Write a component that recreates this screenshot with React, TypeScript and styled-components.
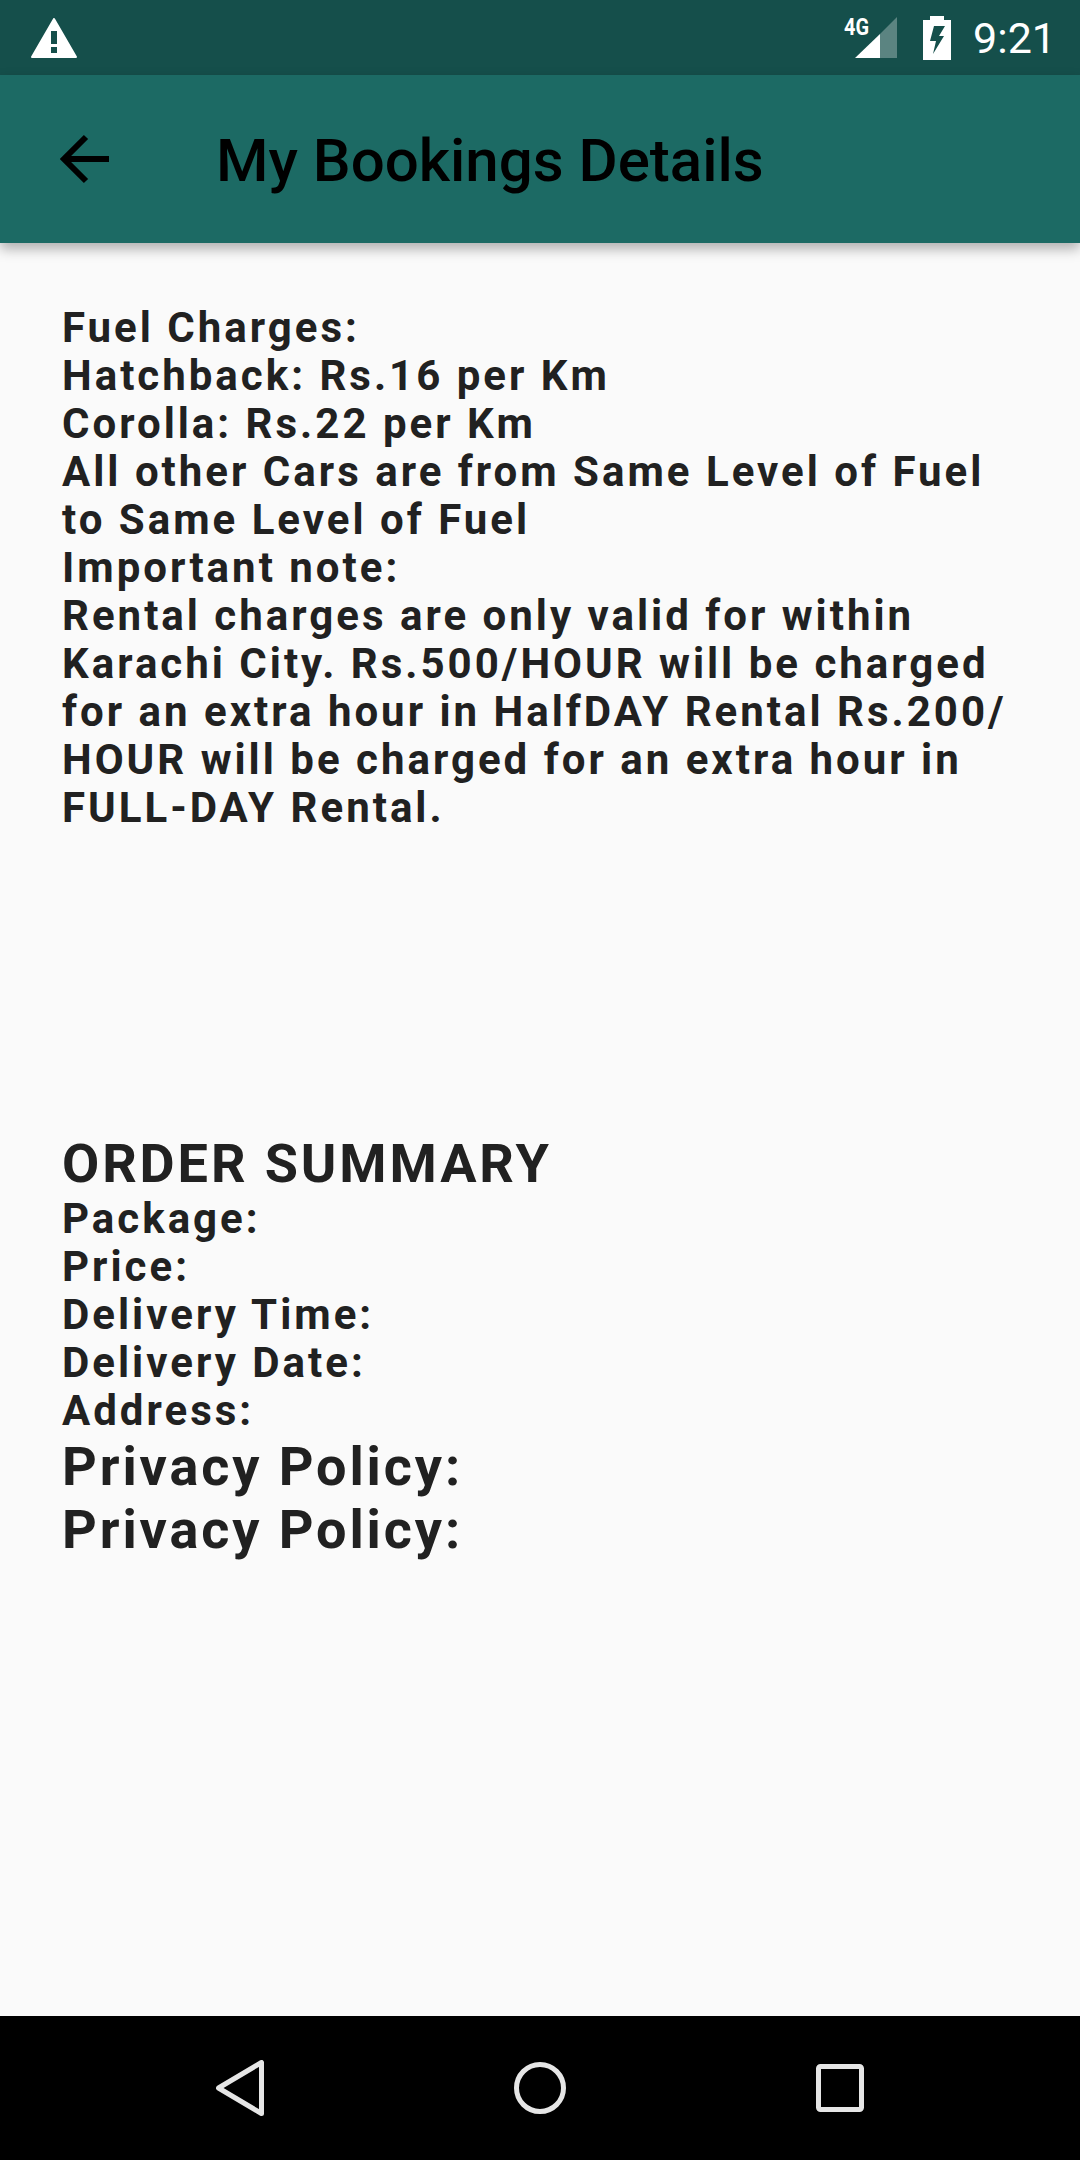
import React from 'react';
import styled, { createGlobalStyle } from 'styled-components';

const GlobalStyle = createGlobalStyle`
  html, body {
    margin: 0;
    padding: 0;
    background: #fafafa;
  }
`;

const Screen = styled.div`
  width: 1080px;
  height: 2160px;
  display: flex;
  flex-direction: column;
  background: #fafafa;
  font-family: Roboto, 'Liberation Sans', sans-serif;
  overflow: hidden;
`;

const StatusBar = styled.div`
  height: 75px;
  flex: none;
  display: flex;
  align-items: center;
  justify-content: space-between;
  padding: 0 24px 0 31px;
  background: #154f4b;
`;

const StatusRight = styled.div`
  display: flex;
  align-items: center;
`;

const Signal = styled.svg`
  overflow: visible;
`;

const Battery = styled.svg`
  margin-left: 25px;
`;

const Clock = styled.span`
  margin-left: 22px;
  color: #fff;
  font-size: 43px;
  font-weight: 400;
  line-height: 50px;
`;

const AppBar = styled.header`
  height: 168px;
  flex: none;
  display: flex;
  align-items: center;
  padding-left: 60px;
  background: #1c6a64;
  box-shadow: 0 6px 12px rgba(0, 0, 0, 0.3);
  position: relative;
  z-index: 1;
`;

const Title = styled.h1`
  margin: 3px 0 0 106px;
  color: #000;
  font-size: 60px;
  font-weight: 500;
  line-height: 70px;
`;

const Content = styled.main`
  flex: 1;
  padding: 61px 62px 0;
`;

const Paragraph = styled.p`
  margin: 0;
  color: #212121;
  font-size: 42px;
  font-weight: 700;
  line-height: 48px;
  letter-spacing: 3px;
`;

const Summary = styled.section`
  margin-top: 301px;
`;

const Heading = styled.h2`
  margin: 0;
  color: #212121;
  font-size: 54px;
  font-weight: 700;
  line-height: 62px;
  letter-spacing: 2.9px;
`;

const SummaryRow = styled.div`
  color: #212121;
  font-size: 42px;
  font-weight: 700;
  line-height: 48px;
  letter-spacing: 3px;
`;

const PolicyRow = styled.div`
  color: #212121;
  font-size: 54px;
  font-weight: 700;
  line-height: 63px;
  letter-spacing: 2.9px;
`;

const NavBar = styled.nav`
  height: 144px;
  flex: none;
  display: grid;
  grid-template-columns: repeat(3, 300px);
  justify-content: center;
  align-items: center;
  justify-items: center;
  background: #000;
`;

const WarningIcon = () => (
  <svg width="46" height="40" viewBox="0 0 46 40">
    <path
      d="M23 1 L45 39 H1 Z"
      fill="#fff"
      stroke="#fff"
      strokeWidth="2"
      strokeLinejoin="round"
    />
    <rect x="20" y="13" width="6" height="13" fill="#154f4b" />
    <rect x="20" y="29" width="6" height="6" fill="#154f4b" />
  </svg>
);

const SignalIcon = () => (
  <Signal width="54" height="44" viewBox="0 0 54 44">
    <path d="M36 18 L53 1 V42 H36 Z" fill="#fff" fillOpacity="0.3" />
    <path d="M11 42 L36 18 V42 Z" fill="#fff" />
    <text
      x="0"
      y="19"
      fill="#fff"
      fontFamily="Roboto, sans-serif"
      fontSize="23"
      fontWeight="700"
      textLength="25"
      lengthAdjust="spacingAndGlyphs"
    >
      4G
    </text>
  </Signal>
);

const BatteryIcon = () => (
  <Battery width="28" height="44" viewBox="0 0 28 44">
    <path d="M7 0 H21 V4 H28 V44 H0 V4 H7 Z" fill="#fff" />
    <path d="M11 10 H22 L16 20 H21 L10 38 L13 25 H7 Z" fill="#154f4b" />
  </Battery>
);

const BackArrow = () => (
  <svg width="50" height="50" viewBox="0 0 50 50" fill="none">
    <path d="M49 25 H4 M26 3 L4 25 L26 47" stroke="#000" strokeWidth="6" />
  </svg>
);

const NavBack = () => (
  <svg width="48" height="56" viewBox="0 0 48 56" fill="none">
    <path
      d="M45.5 2.5 V53.5 L2.5 28 Z"
      stroke="#e6e6e6"
      strokeWidth="5"
      strokeLinejoin="round"
    />
  </svg>
);

const NavHome = () => (
  <svg width="52" height="52" viewBox="0 0 52 52" fill="none">
    <circle cx="26" cy="26" r="23.5" stroke="#e6e6e6" strokeWidth="5" />
  </svg>
);

const NavRecents = () => (
  <svg width="48" height="48" viewBox="0 0 48 48" fill="none">
    <rect x="2.5" y="2.5" width="43" height="43" rx="2" stroke="#e6e6e6" strokeWidth="5" />
  </svg>
);

export default function App() {
  return (
    <Screen>
      <GlobalStyle />
      <StatusBar>
        <WarningIcon />
        <StatusRight>
          <SignalIcon />
          <BatteryIcon />
          <Clock>9:21</Clock>
        </StatusRight>
      </StatusBar>
      <AppBar>
        <BackArrow />
        <Title>My Bookings Details</Title>
      </AppBar>
      <Content>
        <Paragraph>
          Fuel Charges:
          <br />
          Hatchback: Rs.16 per Km
          <br />
          Corolla: Rs.22 per Km
          <br />
          All other Cars are from Same Level of Fuel
          <br />
          to Same Level of Fuel
          <br />
          Important note:
          <br />
          Rental charges are only valid for within
          <br />
          Karachi City. Rs.500/HOUR will be charged
          <br />
          for an extra hour in HalfDAY Rental Rs.200/
          <br />
          HOUR will be charged for an extra hour in
          <br />
          FULL-DAY Rental.
        </Paragraph>
        <Summary>
          <Heading>ORDER SUMMARY</Heading>
          <SummaryRow>Package:</SummaryRow>
          <SummaryRow>Price:</SummaryRow>
          <SummaryRow>Delivery Time:</SummaryRow>
          <SummaryRow>Delivery Date:</SummaryRow>
          <SummaryRow>Address:</SummaryRow>
          <PolicyRow>Privacy Policy:</PolicyRow>
          <PolicyRow>Privacy Policy:</PolicyRow>
        </Summary>
      </Content>
      <NavBar>
        <NavBack />
        <NavHome />
        <NavRecents />
      </NavBar>
    </Screen>
  );
}
